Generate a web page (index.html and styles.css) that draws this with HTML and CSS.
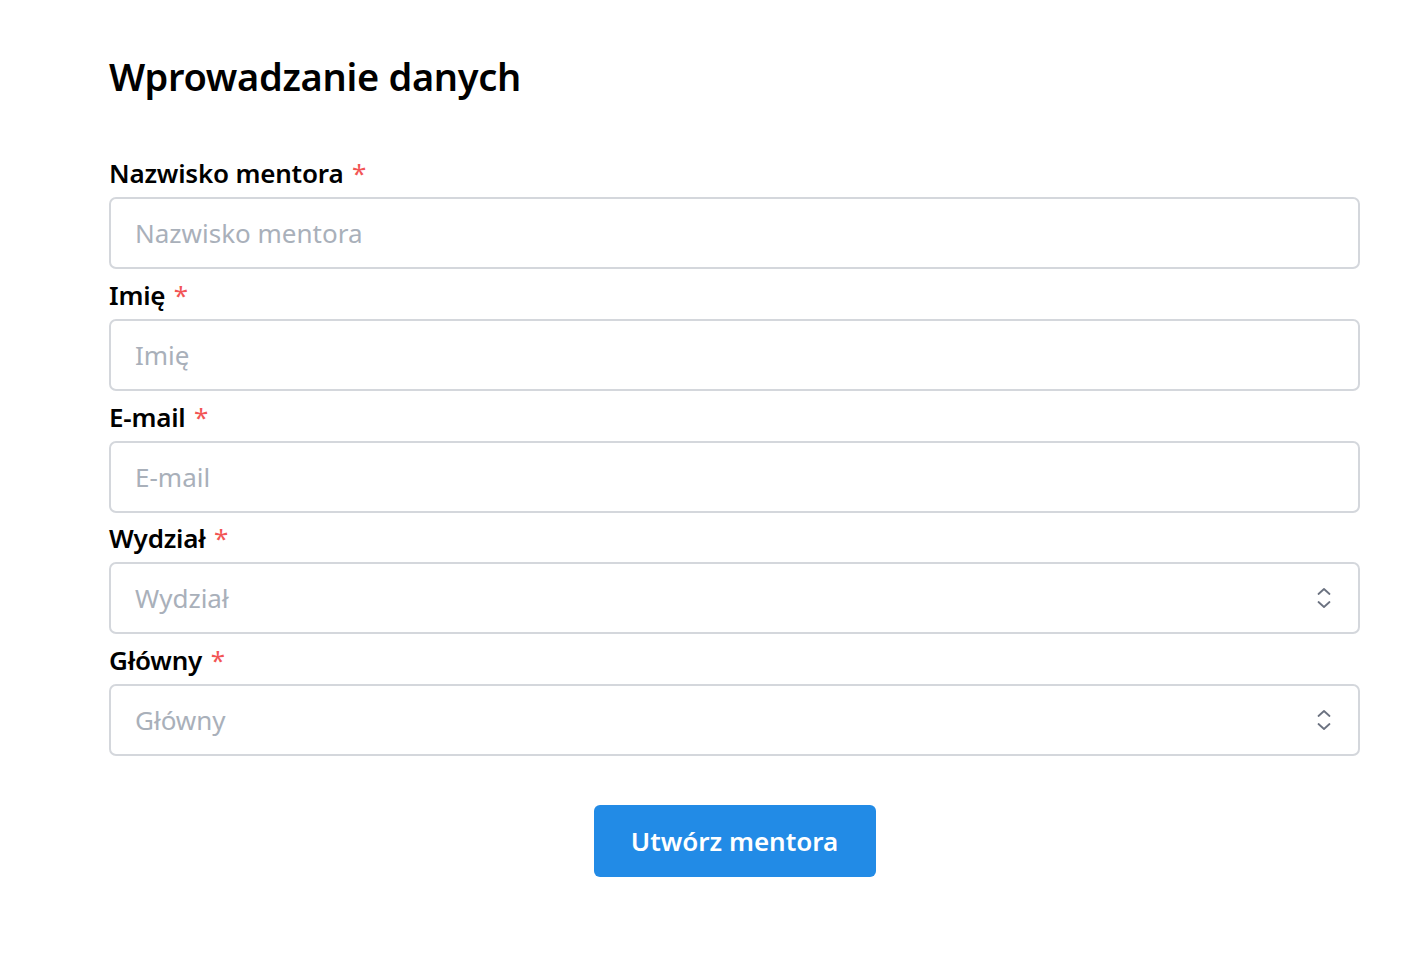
FILE: index.html
```html
<!DOCTYPE html>
<html lang="pl">
<head>
<meta charset="utf-8">
<title>Wprowadzanie danych</title>
<link rel="stylesheet" href="styles.css">
</head>
<body>
<main class="page">
  <h1 class="title">Wprowadzanie danych</h1>
  <form class="form">
    <div class="field">
      <label class="label">Nazwisko mentora <span class="req">*</span></label>
      <input class="control" type="text" placeholder="Nazwisko mentora">
    </div>
    <div class="field">
      <label class="label">Imię <span class="req">*</span></label>
      <input class="control" type="text" placeholder="Imię">
    </div>
    <div class="field">
      <label class="label">E-mail <span class="req">*</span></label>
      <input class="control" type="text" placeholder="E-mail">
    </div>
    <div class="field">
      <label class="label">Wydział <span class="req">*</span></label>
      <div class="control select">
        <span class="placeholder">Wydział</span>
        <svg class="chev" width="16" height="24" viewBox="0 0 16 24" fill="none" stroke="#6b7280" stroke-width="1.8" stroke-linecap="round" stroke-linejoin="round"><path d="M2.5 8 L8 3 L13.5 8"/><path d="M2.5 16 L8 21 L13.5 16"/></svg>
      </div>
    </div>
    <div class="field">
      <label class="label">Główny <span class="req">*</span></label>
      <div class="control select">
        <span class="placeholder">Główny</span>
        <svg class="chev" width="16" height="24" viewBox="0 0 16 24" fill="none" stroke="#6b7280" stroke-width="1.8" stroke-linecap="round" stroke-linejoin="round"><path d="M2.5 8 L8 3 L13.5 8"/><path d="M2.5 16 L8 21 L13.5 16"/></svg>
      </div>
    </div>
    <div class="actions">
      <button class="btn" type="button">Utwórz mentora</button>
    </div>
  </form>
</main>
</body>
</html>
```

FILE: styles.css
```css
* { box-sizing: border-box; }
html, body { margin: 0; padding: 0; background: #fff; }
body { font-family: "Noto Sans", "Open Sans", sans-serif; color: #000; }

.page {
  width: 1251px;
  margin-left: 109px;
  padding-top: 51px;
}

.title {
  margin: 0;
  font-size: 38px;
  font-weight: 600;
  line-height: 50px;
  letter-spacing: -0.3px;
}

.form {
  margin-top: 54px;
  display: flex;
  flex-direction: column;
}

.field { display: flex; flex-direction: column; }
.field + .field { margin-top: 7.75px; }

.label {
  font-size: 26px;
  font-weight: 600;
  line-height: 36px;
  margin-bottom: 6px;
  letter-spacing: -0.2px;
}
.req { color: #f25555; font-weight: 400; margin-left: 2px; }

.control {
  width: 100%;
  height: 72px;
  border: 2px solid #d4d7dc;
  border-radius: 7px;
  padding: 0 24px;
  font-family: inherit;
  font-size: 26px;
  color: #111;
  background: #fff;
  outline: none;
}
.control::placeholder { color: #a9b0ba; }

.select {
  display: flex;
  align-items: center;
  justify-content: space-between;
  padding-right: 26px;
}
.placeholder { color: #a9b0ba; }
.chev { display: block; }

.actions {
  display: flex;
  justify-content: center;
  margin-top: 49px;
}
.btn {
  width: 282px;
  height: 72px;
  border: none;
  border-radius: 6px;
  background: #228be6;
  color: #fff;
  font-family: inherit;
  font-size: 26px;
  font-weight: 600;
  cursor: pointer;
}
```
